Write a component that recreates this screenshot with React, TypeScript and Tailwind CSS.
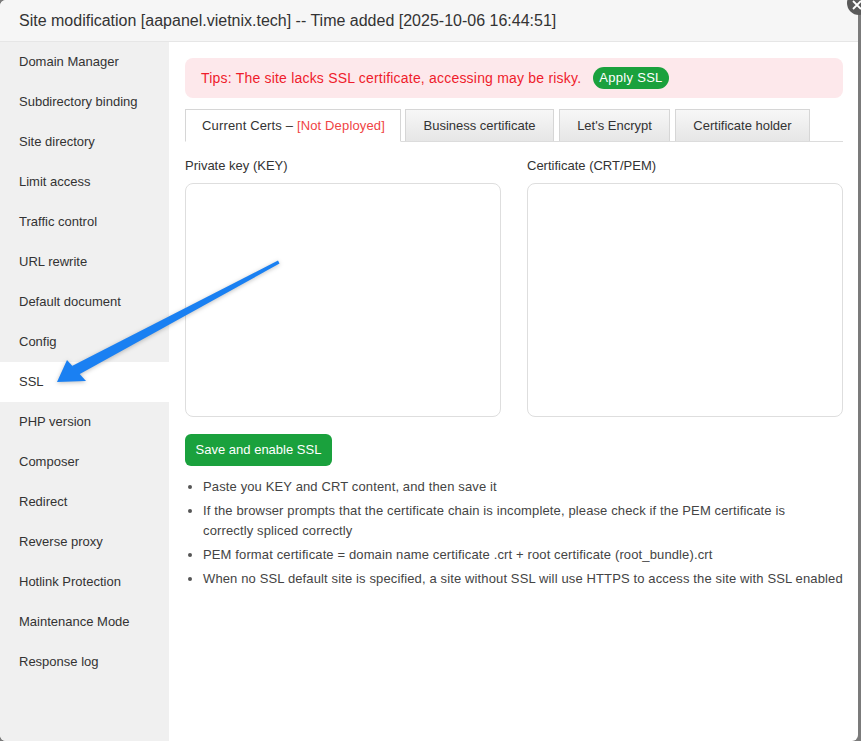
import React from "react";

const menu = [
  "Domain Manager",
  "Subdirectory binding",
  "Site directory",
  "Limit access",
  "Traffic control",
  "URL rewrite",
  "Default document",
  "Config",
  "SSL",
  "PHP version",
  "Composer",
  "Redirect",
  "Reverse proxy",
  "Hotlink Protection",
  "Maintenance Mode",
  "Response log",
];

export default function App() {
  return (
    <div
      className="relative w-[861px] h-[741px] overflow-hidden bg-[#7b7b7b]"
      style={{ fontFamily: '"Liberation Sans", Arial, sans-serif' }}
    >
      <div className="w-[858px] h-[741px] bg-white rounded-[6px] overflow-hidden flex flex-col">
        <div className="h-[42px] shrink-0 bg-[#f6f6f6] border-b border-[#e6e6e6] flex items-center pl-[19px] text-[16px] text-[#333]">
          Site modification [aapanel.vietnix.tech] -- Time added [2025-10-06 16:44:51]
        </div>
        <div className="flex flex-1 min-h-0">
          <div className="w-[169px] shrink-0 bg-[#f0f0f0] flex flex-col">
            {menu.map((m) => (
              <div
                key={m}
                className={
                  m === "SSL"
                    ? "h-[40px] flex items-center pl-[19px] text-[13px] text-[#333] bg-white"
                    : "h-[40px] flex items-center pl-[19px] text-[13px] text-[#333]"
                }
              >
                {m}
              </div>
            ))}
          </div>
          <div className="flex-1 pl-[16px] pr-[15px] pt-[16px] flex flex-col">
            <div className="h-[40px] rounded-[8px] bg-[#fde8eb] flex items-center pl-[16px] text-[14px] tracking-[0.2px] text-[#ef1c2c]">
              <span>Tips: The site lacks SSL certificate, accessing may be risky.</span>
              <span className="ml-[12px] h-[22px] px-[6px] rounded-full bg-[#1aa13d] text-white text-[13px] tracking-[0.3px] flex items-center">
                Apply SSL
              </span>
            </div>
            <div className="mt-[12px] flex items-end border-b border-[#dcdcdc] h-[32px]">
              <div className="h-[33px] w-[216px] -mb-px pl-[16px] flex items-center bg-white border border-[#d6d6d6] border-b-white text-[13px] tracking-[0.15px] text-[#333]">
                Current Certs –&nbsp;<span className="text-[#ef4444]">[Not Deployed]</span>
              </div>
              <div className="h-[32px] w-[149px] ml-[4px] flex items-center justify-center bg-gradient-to-b from-[#f7f7f7] to-[#e6e6e6] border border-b-0 border-[#d6d6d6] text-[13px] text-[#333]">
                Business certificate
              </div>
              <div className="h-[32px] w-[111px] ml-[5px] flex items-center justify-center bg-gradient-to-b from-[#f7f7f7] to-[#e6e6e6] border border-b-0 border-[#d6d6d6] text-[13px] text-[#333]">
                Let's Encrypt
              </div>
              <div className="h-[32px] w-[135px] ml-[5px] flex items-center justify-center bg-gradient-to-b from-[#f7f7f7] to-[#e6e6e6] border border-b-0 border-[#d6d6d6] text-[13px] text-[#333]">
                Certificate holder
              </div>
            </div>
            <div className="mt-[16px] grid grid-cols-[316px_316px] gap-x-[26px]">
              <div className="flex flex-col">
                <div className="text-[13px] leading-[16px] text-[#333]">Private key (KEY)</div>
                <div className="mt-[9px] h-[234px] rounded-[8px] border border-[#dedede] bg-white"></div>
              </div>
              <div className="flex flex-col">
                <div className="text-[13px] leading-[16px] text-[#333]">Certificate (CRT/PEM)</div>
                <div className="mt-[9px] h-[234px] rounded-[8px] border border-[#dedede] bg-white"></div>
              </div>
            </div>
            <div className="mt-[17px]">
              <button className="h-[32px] w-[147px] rounded-[6px] bg-[#1aa13d] text-white text-[13px] flex items-center justify-center">
                Save and enable SSL
              </button>
            </div>
            <ul className="mt-[11px] flex flex-col gap-[4px] pl-[18px] list-disc text-[13px] leading-[20px] tracking-[0.13px] text-[#444] marker:text-[#555]">
              <li>Paste you KEY and CRT content, and then save it</li>
              <li>
                If the browser prompts that the certificate chain is incomplete, please check if the PEM certificate is
                <br />
                correctly spliced correctly
              </li>
              <li>PEM format certificate = domain name certificate .crt + root certificate (root_bundle).crt</li>
              <li>When no SSL default site is specified, a site without SSL will use HTTPS to access the site with SSL enabled</li>
            </ul>
          </div>
        </div>
      </div>
      <div className="absolute right-[-10px] top-[-9px] w-[24px] h-[24px] rounded-full bg-[#5a5a5a] flex items-center justify-center">
        <svg width="10" height="10" viewBox="0 0 10 10" className="mt-[4px] mr-[4px]">
          <path d="M1 1L9 9M9 1L1 9" stroke="white" strokeWidth="1.8" />
        </svg>
      </div>
      <svg
        className="absolute left-0 top-0 pointer-events-none"
        width="861"
        height="741"
        viewBox="0 0 861 741"
        style={{ filter: "drop-shadow(0 1px 2px rgba(0,0,0,0.25))" }}
      >
        <polygon points="278,260.5 279.5,263.5 78,375 72,366" fill="#1a80f2" />
        <polygon points="57,382 67,360 86,381" fill="#1a80f2" />
      </svg>
    </div>
  );
}
